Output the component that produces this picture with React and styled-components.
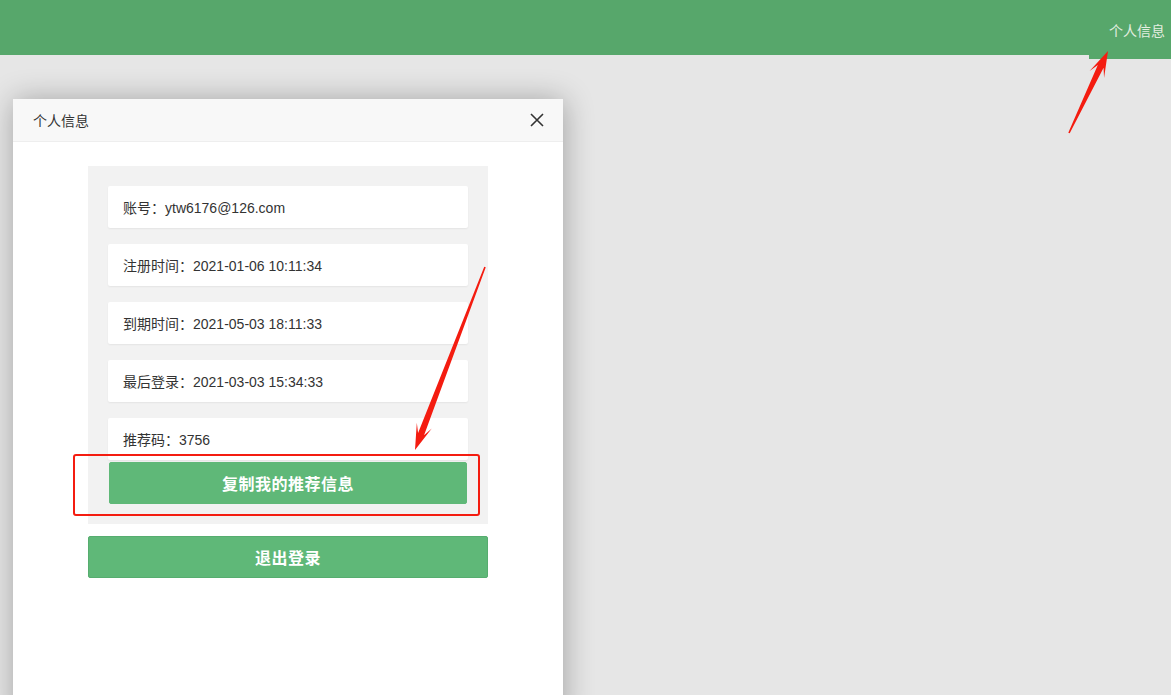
import React from 'react'
import styled, { createGlobalStyle } from 'styled-components'

const GlobalStyle = createGlobalStyle`
	html, body {
		margin: 0;
		padding: 0;
		height: 100%;
		overflow: hidden;
		background: #e6e6e6;
		font-family: "Liberation Sans", "Noto Sans CJK SC", sans-serif;
	}
`

const Page = styled.div`
	position: relative;
	width: 100%;
	height: 695px;
`

const TopBar = styled.div`
	height: 55px;
	background: #57a76b;
	display: flex;
	justify-content: flex-end;
	align-items: flex-start;
`

const UserTab = styled.div`
	width: 82px;
	height: 59px;
	background: #57a76b;
	color: #e4eee0;
	font-size: 14px;
	display: flex;
	justify-content: flex-end;
	padding-right: 6px;
	padding-top: 20px;
	box-sizing: border-box;
`

const Dialog = styled.div`
	position: absolute;
	left: 13px;
	top: 99px;
	width: 550px;
	height: 620px;
	background: #fff;
	box-shadow: 1px 1px 30px rgba(0, 0, 0, 0.3);
	border-radius: 2px;
`

const DialogHead = styled.div`
	height: 43px;
	background: #f8f8f8;
	border-bottom: 1px solid #eee;
	display: flex;
	align-items: center;
	justify-content: space-between;
	padding: 0 17px 0 20px;
	box-sizing: border-box;
	font-size: 14px;
	color: #333;
`

const CloseButton = styled.button`
	border: none;
	background: none;
	padding: 0;
	width: 18px;
	height: 18px;
	display: flex;
	cursor: pointer;
`

const DialogBody = styled.div`
	padding: 24px 75px 0;
	display: flex;
	flex-direction: column;
`

const InfoPanel = styled.div`
	background: #f2f2f2;
	padding: 20px;
	display: flex;
	flex-direction: column;
	gap: 16px;
`

const InfoCard = styled.div`
	height: 42px;
	background: #fff;
	box-shadow: 0 1px 2px rgba(0, 0, 0, 0.06);
	border-radius: 2px;
	display: flex;
	align-items: center;
	padding: 0 15px;
	font-size: 14px;
	color: #333;
`

const Highlight = styled.div`
	position: relative;
	margin-top: -14px;
`

const RedFrame = styled.div`
	position: absolute;
	left: -35px;
	right: -12px;
	top: -8px;
	bottom: -12px;
	border: 2px solid #f41c10;
	border-radius: 3px;
	pointer-events: none;
`

const GreenButton = styled.button`
	width: ${p => (p.$inset ? '358px' : '100%')};
	margin: ${p => (p.$inset ? '0 1px' : '12px 0 0')};
	height: 42px;
	background: #5fb878;
	border: 1px solid ${p => (p.$inset ? '#5fb878' : '#56ad6f')};
	border-radius: 2px;
	color: #fff;
	font-size: 16px;
	font-weight: bold;
	font-family: "Noto Sans CJK SC", sans-serif;
	letter-spacing: 0.5px;
	cursor: pointer;
`

const Arrows = styled.svg`
	position: absolute;
	left: 0;
	top: 0;
	pointer-events: none;
`

const Arrow = ({ x1, y1, x2, y2 }) => {
	const dx = x2 - x1
	const dy = y2 - y1
	const len = Math.hypot(dx, dy)
	const ux = dx / len
	const uy = dy / len
	const px = -uy
	const py = ux
	const headLen = 26
	const headW = 8
	const bx = x2 - ux * headLen
	const by = y2 - uy * headLen
	const nx = x2 - ux * (headLen - 9)
	const ny = y2 - uy * (headLen - 9)
	const points = [
		[x1 + px * 0.8, y1 + py * 0.8],
		[nx + px * 3.2, ny + py * 3.2],
		[bx + px * headW, by + py * headW],
		[x2, y2],
		[bx - px * headW, by - py * headW],
		[nx - px * 3.2, ny - py * 3.2],
		[x1 - px * 0.8, y1 - py * 0.8],
	]
	return <polygon points={points.map(p => p.join(',')).join(' ')} fill="#f41c10" />
}

const infoRows = [
	'账号：ytw6176@126.com',
	'注册时间：2021-01-06 10:11:34',
	'到期时间：2021-05-03 18:11:33',
	'最后登录：2021-03-03 15:34:33',
	'推荐码：3756',
]

const App = () => {
	document.title = '个人信息'

	return (
		<Page>
			<GlobalStyle />
			<TopBar>
				<UserTab>个人信息</UserTab>
			</TopBar>
			<Dialog>
				<DialogHead>
					<span>个人信息</span>
					<CloseButton aria-label="关闭">
						<svg width="18" height="18" viewBox="0 0 18 18">
							<path d="M3 3 L15 15 M15 3 L3 15" stroke="#333" strokeWidth="1.6" />
						</svg>
					</CloseButton>
				</DialogHead>
				<DialogBody>
					<InfoPanel>
						{infoRows.map(row => (
							<InfoCard key={row}>{row}</InfoCard>
						))}
						<Highlight>
							<RedFrame />
							<GreenButton $inset>复制我的推荐信息</GreenButton>
						</Highlight>
					</InfoPanel>
					<GreenButton>退出登录</GreenButton>
				</DialogBody>
			</Dialog>
			<Arrows width="1171" height="695">
				<Arrow x1={1069} y1={133} x2={1108} y2={51} />
				<Arrow x1={485} y1={267} x2={415} y2={450} />
			</Arrows>
		</Page>
	)
}

export default App
